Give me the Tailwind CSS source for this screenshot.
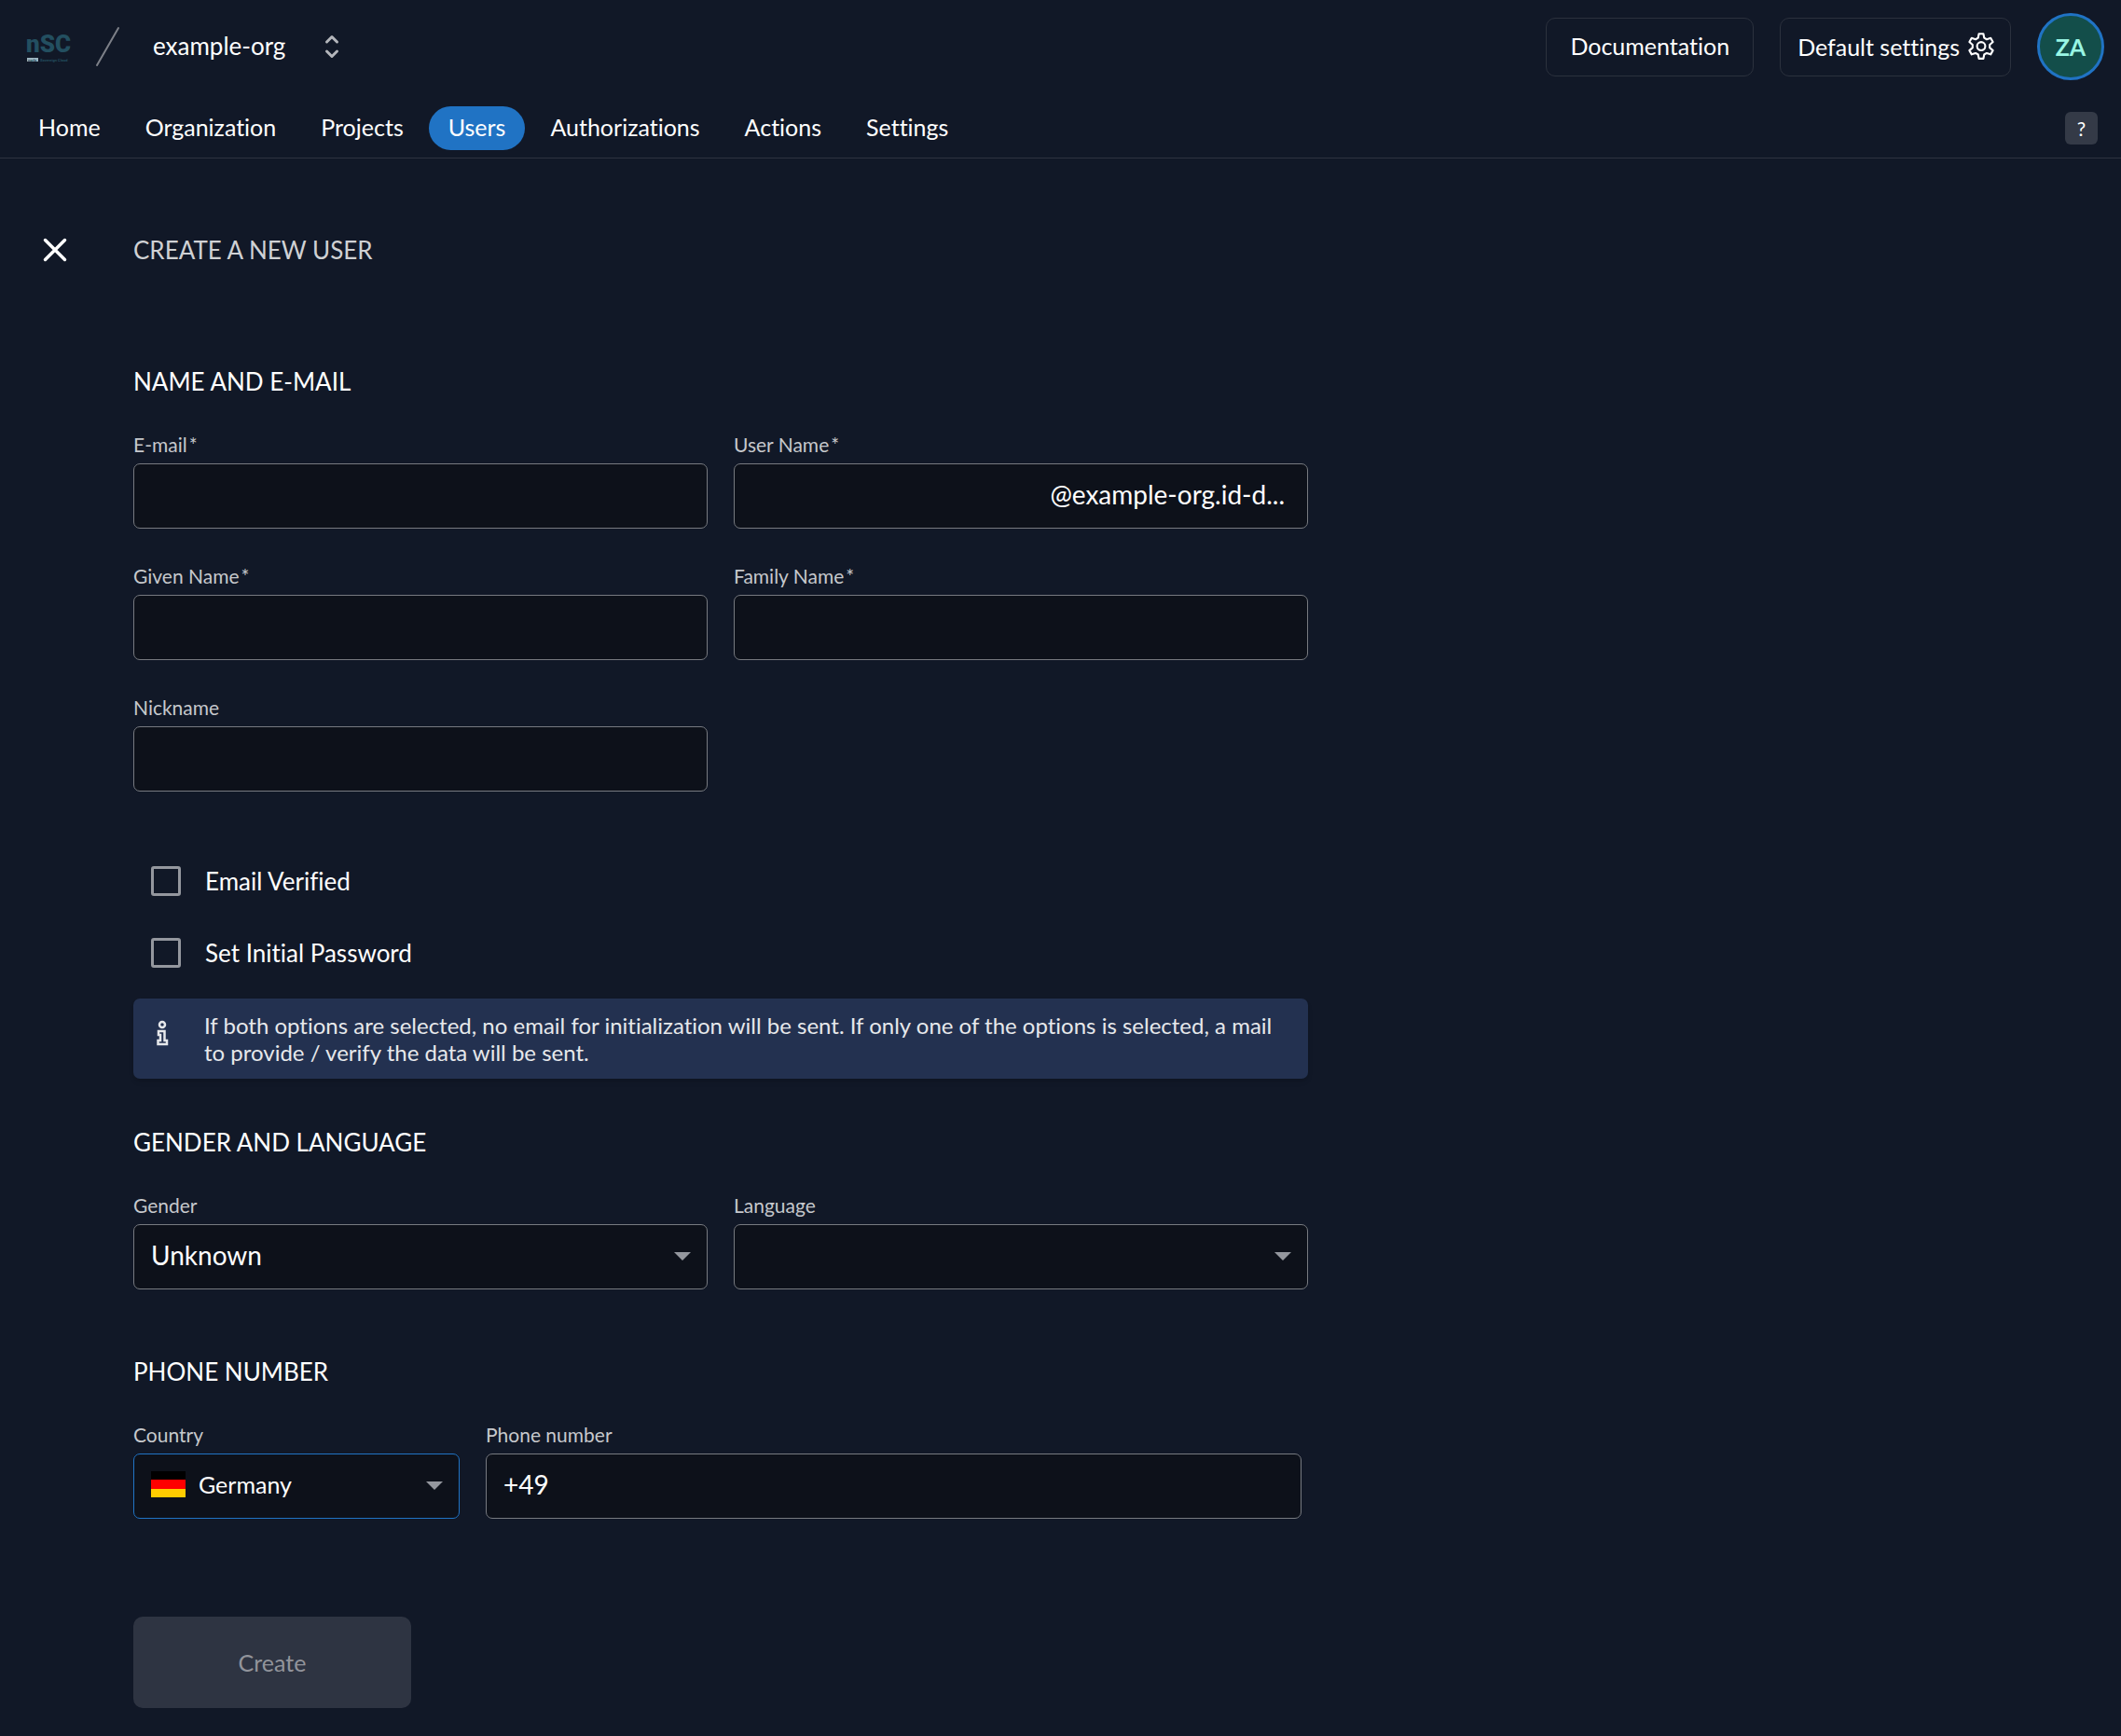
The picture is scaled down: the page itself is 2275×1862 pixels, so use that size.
<!DOCTYPE html>
<html lang="en">
<head>
    <meta charset="UTF-8">
    <meta name="viewport" content="width=device-width, initial-scale=1.0">
    <title>Create a new user</title>
    <script src="https://cdn.jsdelivr.net/npm/@tailwindcss/browser@4"></script>
</head>
<body class="min-h-screen bg-[#111827] font-[Lato,sans-serif] text-[25px] leading-8 text-white [font-variant-ligatures:no-common-ligatures]">
    <!-- Header -->
    <header class="border-b border-[#2d3340]">
        <div class="flex h-[100px] items-center pl-7 pr-[18px]">
            <a href="#" aria-label="Home">
                <svg class="h-10 w-[50px]" viewBox="0 -6 50 40" fill="#234f60">
                    <text x="0" y="20" font-family="Roboto, sans-serif" font-weight="900" font-size="26">nSC</text>
                    <rect x="1" y="26" width="12" height="4" fill="#9db4bf" />
                    <text x="2" y="30" font-family="Roboto, sans-serif" font-weight="700" font-size="4" fill="#234f60">norlx</text>
                    <text x="15" y="30" font-family="Roboto, sans-serif" font-weight="700" font-size="4">Sovereign Cloud</text>
                </svg>
            </a>
            <svg class="ml-6 h-11 w-7" viewBox="0 0 28 44" fill="none" stroke="#7d8088" stroke-width="2" stroke-linecap="round">
                <path d="M2 42L25 2" />
            </svg>
            <button type="button" class="ml-[34px] flex items-center gap-[42px] text-[26px]">
                <span class="pb-0.5">example-org</span>
                <svg class="h-7 w-4" viewBox="0 0 16 28" fill="none" stroke="#b4b6bb" stroke-width="3" stroke-linecap="round" stroke-linejoin="round">
                    <path d="M2.500 9L8 3.500L13.500 9M2.500 19L8 24.500L13.500 19" />
                </svg>
            </button>

            <div class="ml-auto flex items-center gap-7">
                <a href="#" class="flex h-[63px] items-center rounded-[10px] border border-[#2b313d] px-[25px] pb-0.5">Documentation</a>
                <button type="button" class="flex h-[63px] items-center gap-1.5 rounded-[10px] border border-[#2b313d] pl-[18px] pr-3.5">
                    Default settings
                    <svg class="size-[34px]" viewBox="0 0 24 24" fill="none" stroke="currentColor" stroke-width="1.500" stroke-linejoin="round">
                        <path d="M10.300 2.300h3.400l.6 3.100 1.900 1.100 3-1 1.700 3-2.400 2.100v2.200l2.400 2.100-1.700 3-3-1-1.900 1.100-.6 3.100h-3.400l-.6-3.100-1.900-1.100-3 1-1.700-3 2.400-2.100v-2.200L3.100 8.500l1.700-3 3 1 1.900-1.100z" />
                        <circle cx="12" cy="11.700" r="3.100" />
                    </svg>
                </button>
                <button type="button" class="size-[72px] rounded-full border-3 border-[#2073c4] bg-[#134e4a] font-bold text-[#99f6e4]">ZA</button>
            </div>
        </div>

        <!-- Navigation -->
        <nav class="flex items-center gap-1.5 pt-3.5 pr-[25px] pb-2 pl-5">
            <a href="#" class="flex h-[47px] items-center rounded-full px-[21px] pb-1">Home</a>
            <a href="#" class="flex h-[47px] items-center rounded-full px-[21px] pb-1">Organization</a>
            <a href="#" class="flex h-[47px] items-center rounded-full px-[21px] pb-1">Projects</a>
            <a href="#" aria-current="page" class="flex h-[47px] items-center rounded-full bg-[#2073c4] px-[21px] pb-1">Users</a>
            <a href="#" class="flex h-[47px] items-center rounded-full px-[21px] pb-1">Authorizations</a>
            <a href="#" class="flex h-[47px] items-center rounded-full px-[21px] pb-1">Actions</a>
            <a href="#" class="flex h-[47px] items-center rounded-full px-[21px] pb-1">Settings</a>
            <button type="button" class="ml-auto size-[35px] rounded-md bg-[#343a47] text-[21px]">?</button>
        </nav>
    </header>

    <main class="flex items-start gap-[68px] pt-[82px] pr-7 pb-6 pl-[43px]">
        <button type="button" aria-label="Close" class="flex size-8 items-center justify-center">
            <svg class="size-7" viewBox="0 0 28 28" fill="none" stroke="currentColor" stroke-width="3.500" stroke-linecap="round">
                <path d="M3.500 3.500L24.500 24.500M24.500 3.500L3.500 24.500" />
            </svg>
        </button>

        <form class="w-full max-w-[1260px]">
            <h1 class="mb-[109px] text-[26px] text-[#cfd1d4]">CREATE A NEW USER</h1>

            <!-- Name and e-mail -->
            <h2 class="mb-10 text-[26px]">NAME AND E-MAIL</h2>
            <div class="grid grid-cols-2 gap-x-7 gap-y-[39px]">
                <div>
                    <label for="email" class="mb-2 block text-[21px] leading-6 text-[#c6c8cc]">E-mail<span class="ml-0.5">*</span></label>
                    <input type="email" id="email" required class="block h-[70px] w-full rounded-[7px] border border-[#777a80] bg-[#0d111a] px-[18px] pb-1 text-[28px]">
                </div>
                <div>
                    <label for="username" class="mb-2 block text-[21px] leading-6 text-[#c6c8cc]">User Name<span class="ml-0.5">*</span></label>
                    <div class="flex h-[70px] items-center rounded-[7px] border border-[#777a80] bg-[#0d111a] pr-6 pb-1 text-[28px]">
                        <input type="text" id="username" required class="h-full w-full min-w-0 flex-1 pl-[18px] outline-none">
                        <span>@example-org.id-d...</span>
                    </div>
                </div>
                <div>
                    <label for="givenName" class="mb-2 block text-[21px] leading-6 text-[#c6c8cc]">Given Name<span class="ml-0.5">*</span></label>
                    <input type="text" id="givenName" required class="block h-[70px] w-full rounded-[7px] border border-[#777a80] bg-[#0d111a] px-[18px] pb-1 text-[28px]">
                </div>
                <div>
                    <label for="familyName" class="mb-2 block text-[21px] leading-6 text-[#c6c8cc]">Family Name<span class="ml-0.5">*</span></label>
                    <input type="text" id="familyName" required class="block h-[70px] w-full rounded-[7px] border border-[#777a80] bg-[#0d111a] px-[18px] pb-1 text-[28px]">
                </div>
                <div>
                    <label for="nickname" class="mb-2 block text-[21px] leading-6 text-[#c6c8cc]">Nickname</label>
                    <input type="text" id="nickname" class="block h-[70px] w-full rounded-[7px] border border-[#777a80] bg-[#0d111a] px-[18px] pb-1 text-[28px]">
                </div>
            </div>

            <div class="mt-[57px] mb-[11px] text-[26px]">
                <div class="flex h-[77px] items-center gap-[26px] pl-[19px]">
                    <input type="checkbox" id="emailVerified" class="size-8 appearance-none rounded-[3px] border-3 border-[#94979e] checked:bg-[#2073c4]">
                    <label for="emailVerified">Email Verified</label>
                </div>
                <div class="flex h-[77px] items-center gap-[26px] pl-[19px]">
                    <input type="checkbox" id="initialPassword" class="size-8 appearance-none rounded-[3px] border-3 border-[#94979e] checked:bg-[#2073c4]">
                    <label for="initialPassword">Set Initial Password</label>
                </div>
            </div>

            <div class="flex items-start gap-9 rounded-[7px] bg-[#233150] py-3.5 pr-6 pl-6 text-[24px] leading-[29px] text-[#e6e8eb] shadow-md">
                <svg class="mt-2 h-8 w-4 shrink-0" viewBox="0 0 16 32" fill="none" stroke="currentColor" stroke-width="2.500">
                    <circle cx="7" cy="6" r="3" />
                    <path d="M3 13h6.500v10H12v4H2.500v-4H5v-6H3z" />
                </svg>
                <p>If both options are selected, no email for initialization will be sent. If only one of the options is selected, a mail to provide / verify the data will be sent.</p>
            </div>

            <!-- Gender and language -->
            <h2 class="mt-[52px] mb-10 text-[26px]">GENDER AND LANGUAGE</h2>
            <div class="grid grid-cols-2 gap-x-7">
                <div>
                    <label for="gender" class="mb-2 block text-[21px] leading-6 text-[#c6c8cc]">Gender</label>
                    <div class="relative">
                        <select id="gender" class="block h-[70px] w-full appearance-none rounded-[7px] border border-[#777a80] bg-[#0d111a] px-[18px] pb-1 text-[28px]">
                            <option>Unknown</option>
                            <option>Female</option>
                            <option>Male</option>
                            <option>Diverse</option>
                        </select>
                        <svg class="pointer-events-none absolute top-[30px] right-[18px] h-[9px] w-[18px]" viewBox="0 0 18 9" fill="#94979e"><path d="M0 0h18L9 9z" /></svg>
                    </div>
                </div>
                <div>
                    <label for="language" class="mb-2 block text-[21px] leading-6 text-[#c6c8cc]">Language</label>
                    <div class="relative">
                        <select id="language" class="block h-[70px] w-full appearance-none rounded-[7px] border border-[#777a80] bg-[#0d111a] px-[18px] pb-1 text-[28px]">
                            <option></option>
                        </select>
                        <svg class="pointer-events-none absolute top-[30px] right-[18px] h-[9px] w-[18px]" viewBox="0 0 18 9" fill="#94979e"><path d="M0 0h18L9 9z" /></svg>
                    </div>
                </div>
            </div>

            <!-- Phone number -->
            <h2 class="mt-[72px] mb-10 text-[26px]">PHONE NUMBER</h2>
            <div class="flex gap-7 pr-[7px]">
                <div class="w-[350px] shrink-0">
                    <label for="country" class="mb-2 block text-[21px] leading-6 text-[#c6c8cc]">Country</label>
                    <div class="relative">
                        <select id="country" class="block h-[70px] w-full appearance-none rounded-[7px] border border-[#2073c4] bg-[#0d111a] pr-[18px] pb-1 pl-[69px]">
                            <option>Germany</option>
                        </select>
                        <svg class="pointer-events-none absolute top-[19px] left-[19px] h-7 w-[37px]" viewBox="0 0 37 28">
                            <rect width="37" height="28" fill="#000" />
                            <rect y="9" width="37" height="19" fill="#f00" />
                            <rect y="19" width="37" height="9" fill="#fc0" />
                        </svg>
                        <svg class="pointer-events-none absolute top-[30px] right-[18px] h-[9px] w-[18px]" viewBox="0 0 18 9" fill="#94979e"><path d="M0 0h18L9 9z" /></svg>
                    </div>
                </div>
                <div class="flex-1">
                    <label for="phone" class="mb-2 block text-[21px] leading-6 text-[#c6c8cc]">Phone number</label>
                    <input type="tel" id="phone" value="+49" class="block h-[70px] w-full rounded-[7px] border border-[#777a80] bg-[#0d111a] px-[18px] pb-1 text-[28px]">
                </div>
            </div>

            <button type="submit" disabled class="mt-[105px] block h-[98px] w-[298px] rounded-[10px] bg-[#2e3442] text-[#92949b]">Create</button>
        </form>
    </main>
</body>
</html>
